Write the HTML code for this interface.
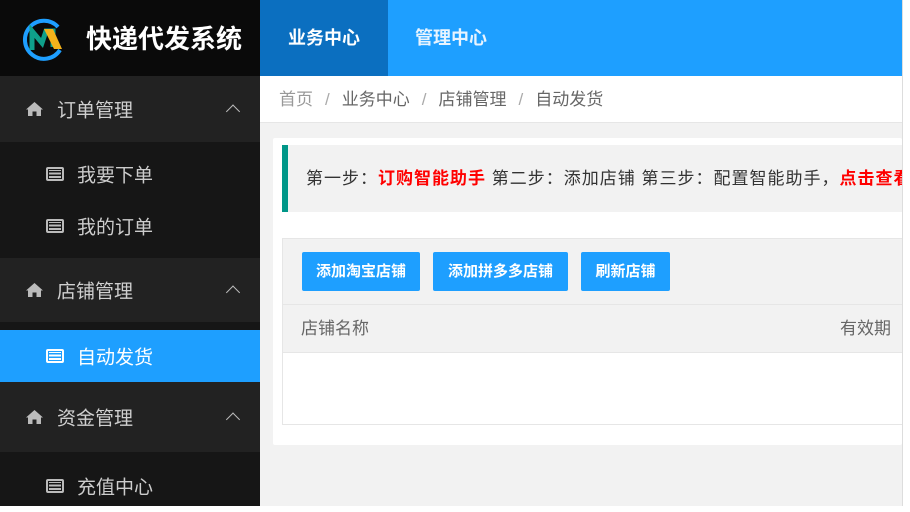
<!DOCTYPE html>
<html><head><meta charset="utf-8"><style>
*{margin:0;padding:0;box-sizing:border-box}
body{width:910px;height:506px;overflow:hidden;font-family:"Liberation Sans","Noto Sans CJK SC",sans-serif;background:#fff;position:relative}
.side{position:absolute;left:0;top:0;width:260px;height:506px;background:#161616}
.logo{height:76px;background:#0a0a0a;position:relative}
.logo .t{position:absolute;left:86px;top:22px;color:#fff;font-size:26px;font-weight:bold;line-height:34px}
.grp{height:66px;background:#222;color:#cfcfcf;font-size:19px;position:relative}
.grp .l{position:absolute;left:57px;top:50%;transform:translateY(-50%)}
.grp svg{position:absolute;left:26px;top:50%;transform:translateY(-50%)}
.grp .c{position:absolute;right:22px;top:50%;width:10px;height:10px;border-left:1.5px solid #bbb;border-top:1.5px solid #bbb;transform:translateY(-25%) rotate(45deg)}
.sub{height:52px;color:#ccc;font-size:19px;position:relative}
.sub .l{position:absolute;left:77px;top:50%;transform:translateY(-50%)}
.ic{position:absolute;left:46px;top:50%;transform:translateY(-50%);width:18px;height:14px;border:2px solid #bbb;border-radius:2px;background:repeating-linear-gradient(#bbb 0 2px,transparent 2px 3.5px);background-clip:content-box;padding:1px}
.sel{background:#1e9fff;color:#fff}
.sel .ic{border-color:#fff;background:repeating-linear-gradient(#fff 0 2px,transparent 2px 3.5px);background-clip:content-box}
.top{position:absolute;left:260px;top:0;width:642px;height:76px;background:#1e9fff}
.top .a{position:absolute;left:0;top:0;width:128px;height:76px;background:#0b6fc0;color:#fff;font-size:18px;font-weight:bold;line-height:76px;text-align:center}
.top .b{position:absolute;left:155px;top:0;color:#e8f4ff;font-size:18px;font-weight:bold;line-height:76px}
.bc{position:absolute;left:260px;top:76px;width:642px;height:47px;background:#fff;border-bottom:1px solid #e6e6e6;font-size:17px;color:#666;line-height:47px;padding-left:19px}
.bc span{color:#999}
.bc i{font-style:normal;color:#aaa;margin:0 12px}
.main{position:absolute;left:260px;top:123px;width:642px;height:383px;background:#f2f2f2}
.card{position:absolute;left:13px;top:15px;width:629px;height:307px;background:#fff;border-radius:2px}
.note{position:absolute;left:9px;top:7px;width:620px;height:67px;background:#f2f2f2;border-left:6px solid #009688;font-size:17px;color:#333;line-height:67px;padding-left:18px;white-space:nowrap;overflow:hidden;letter-spacing:1px}
.note b{color:#f00}
.tbl{position:absolute;left:9px;top:100px;width:620px;height:187px;border:1px solid #e6e6e6;border-right:none;background:#fff}
.tb{height:65px;background:#f2f2f2;position:relative}
.btn{position:absolute;top:13px;height:39px;background:#1e9fff;color:#fff;font-size:15px;font-weight:bold;line-height:39px;text-align:center;border-radius:2px}
.th{height:49px;background:#f2f2f2;border-top:1px solid #e6e6e6;border-bottom:1px solid #e6e6e6;position:relative;color:#666;font-size:17px;line-height:48px}
.edge{position:absolute;left:902px;top:0;width:8px;height:506px;background:#fff;border-left:1px solid #ddd}
</style></head><body>
<div class="side">
 <div class="logo">
  <svg style="position:absolute;left:20px;top:17px" width="46" height="46" viewBox="0 0 46 46">
   <path d="M38 10 A19 19 0 1 0 40 33" fill="none" stroke="#1e9fff" stroke-width="4"/>
   <path d="M12 33 L12 14 L22 26 L26 14 L33 14 L33 30" fill="none" stroke="#0fa08a" stroke-width="5" stroke-linejoin="miter"/>
   <path d="M24 12 L33 12 L42 32 L34 32 Z" fill="#f3b21b"/>
  </svg>
  <div class="t">快递代发系统</div>
 </div>
 <div class="grp"><svg width="17" height="14" viewBox="0 0 17 14"><path d="M8.5 0 L17 7.5 L15 7.5 L15 14 L10.5 14 L10.5 9.5 L6.5 9.5 L6.5 14 L2 14 L2 7.5 L0 7.5 Z" fill="#bbb"/></svg><span class="l">订单管理</span><span class="c"></span></div>
 <div style="height:6px"></div>
 <div class="sub"><span class="ic"></span><span class="l">我要下单</span></div>
 <div class="sub"><span class="ic"></span><span class="l">我的订单</span></div>
 <div style="height:6px"></div>
 <div class="grp" style="height:64px"><svg width="17" height="14" viewBox="0 0 17 14"><path d="M8.5 0 L17 7.5 L15 7.5 L15 14 L10.5 14 L10.5 9.5 L6.5 9.5 L6.5 14 L2 14 L2 7.5 L0 7.5 Z" fill="#bbb"/></svg><span class="l">店铺管理</span><span class="c"></span></div>
 <div style="height:8px"></div>
 <div class="sub sel"><span class="ic"></span><span class="l">自动发货</span></div>
 <div class="grp" style="height:70px"><svg width="17" height="14" viewBox="0 0 17 14"><path d="M8.5 0 L17 7.5 L15 7.5 L15 14 L10.5 14 L10.5 9.5 L6.5 9.5 L6.5 14 L2 14 L2 7.5 L0 7.5 Z" fill="#bbb"/></svg><span class="l">资金管理</span><span class="c"></span></div>
 <div class="sub" style="margin-top:8px"><span class="ic"></span><span class="l">充值中心</span></div>
</div>
<div class="top"><div class="a">业务中心</div><div class="b">管理中心</div></div>
<div class="bc"><span>首页</span><i>/</i>业务中心<i>/</i>店铺管理<i>/</i>自动发货</div>
<div class="main">
 <div class="card">
  <div class="note">第一步：<b>订购智能助手</b> 第二步：添加店铺 第三步：配置智能助手，<b>点击查看教程</b></div>
  <div class="tbl">
   <div class="tb">
    <div class="btn" style="left:19px;width:118px">添加淘宝店铺</div>
    <div class="btn" style="left:150px;width:135px">添加拼多多店铺</div>
    <div class="btn" style="left:298px;width:89px">刷新店铺</div>
   </div>
   <div class="th"><span style="position:absolute;left:18px">店铺名称</span><span style="position:absolute;left:557px">有效期</span></div>
  </div>
 </div>
</div>
<div class="edge"></div>
</body></html>
